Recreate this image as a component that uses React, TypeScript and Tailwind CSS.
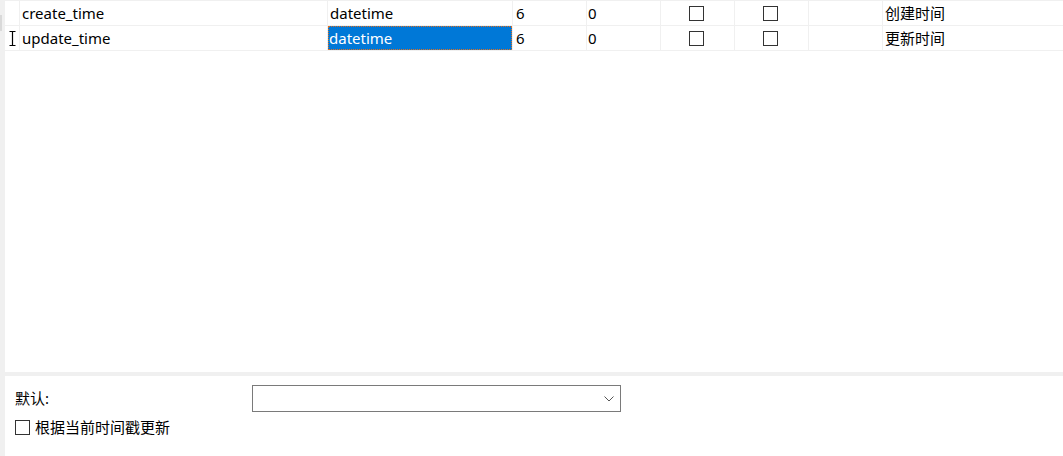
import React from "react";

const font = { fontFamily: '"Segoe UI", "Noto Sans", "Noto Sans CJK SC", sans-serif' };

function Box() {
  return <div className="w-[15px] h-[15px] border border-[#333333] bg-white" />;
}

function IBeam() {
  return (
    <svg width="7" height="15" viewBox="0 0 7 15" className="block">
      <path d="M0.5 0.5 H6.5 M3.5 0.5 V14.5 M0.5 14.5 H6.5" stroke="#000" strokeWidth="1.2" fill="none" />
    </svg>
  );
}

type Row = { name: string; type: string; len: string; dec: string; comment: string; selected?: boolean };

const rows: Row[] = [
  { name: "create_time", type: "datetime", len: "6", dec: "0", comment: "创建时间" },
  { name: "update_time", type: "datetime", len: "6", dec: "0", comment: "更新时间", selected: true },
];

function GridRow({ r }: { r: Row }) {
  return (
    <div className="flex h-[25px] border-b border-[#f0f0f0] text-[15px] text-black leading-[24px]">
      <div className="w-[15px] shrink-0 border-r border-[#f0f0f0] flex items-center justify-center">
        {r.selected ? <IBeam /> : null}
      </div>
      <div className="w-[308px] shrink-0 border-r border-[#f0f0f0] pl-[2px]">{r.name}</div>
      <div className="w-[185px] shrink-0 border-r border-[#f0f0f0]">
        {r.selected ? (
          <div className="h-[24px] bg-[#0078d7] text-white pl-[1px] outline-1 outline-dotted outline-[#e07020] -outline-offset-1">
            {r.type}
          </div>
        ) : (
          <div className="pl-[2px]">{r.type}</div>
        )}
      </div>
      <div className="w-[74px] shrink-0 border-r border-[#f0f0f0] pl-[3px]">{r.len}</div>
      <div className="w-[74px] shrink-0 border-r border-[#f0f0f0] pl-[1px]">{r.dec}</div>
      <div className="w-[74px] shrink-0 border-r border-[#f0f0f0] flex items-center pl-[28px]">
        <Box />
      </div>
      <div className="w-[74px] shrink-0 border-r border-[#f0f0f0] flex items-center pl-[28px]">
        <Box />
      </div>
      <div className="w-[74px] shrink-0 border-r border-[#f0f0f0]" />
      <div className="flex-1 pl-[2px]">{r.comment}</div>
    </div>
  );
}

export default function App() {
  return (
    <div className="w-[1063px] h-[456px] flex bg-white overflow-hidden" style={font}>
      <div className="w-[5px] shrink-0 bg-[#f0f0f0] flex flex-col">
        <div className="h-[15px]" />
        <div className="h-[16px] w-[2px] bg-[#d9d9d9]" />
      </div>
      <div className="flex-1 flex flex-col">
        <div className="h-[372px] border-t border-[#f0f0f0]">
          {rows.map((r) => (
            <GridRow key={r.name} r={r} />
          ))}
        </div>
        <div className="h-[4px] bg-[#f0f0f0]" />
        <div className="flex-1 flex flex-col pt-[9px] pl-[10px] text-[15px] text-black">
          <div className="flex items-center h-[27px]">
            <div className="w-[237px]">默认:</div>
            <div className="w-[369px] h-[27px] border border-[#7a7a7a] flex items-center justify-end pr-[6px]">
              <svg width="10" height="6" viewBox="0 0 10 6">
                <path d="M0.5 0.5 L5 5 L9.5 0.5" stroke="#555" strokeWidth="1" fill="none" />
              </svg>
            </div>
          </div>
          <div className="flex items-center mt-[7px] gap-[5px] h-[16px]">
            <Box />
            <span>根据当前时间戳更新</span>
          </div>
        </div>
      </div>
    </div>
  );
}
